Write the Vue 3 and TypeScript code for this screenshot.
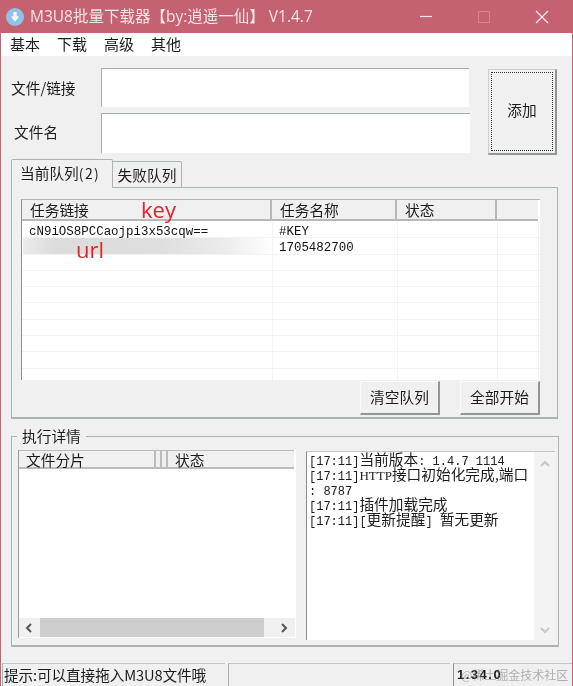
<script setup lang="ts">
const menus: string[] = ['基本', '下载', '高级', '其他']

const queueCols = [
  { label: '任务链接', width: 250 },
  { label: '任务名称', width: 125 },
  { label: '状态', width: 100 },
  { label: '', width: 41 },
]

const rows: string[][] = [
  ['cN9iOS8PCCaojpi3x53cqw==', '#KEY'],
  ['', '1705482700'],
  [], [], [], [], [], [], [], [],
]
</script>

<template>
  <div class="window">
    <header class="titlebar">
      <svg class="app-icon" width="18" height="18" viewBox="0 0 18 18">
        <circle cx="9" cy="9" r="9" fill="#8fc3ea" />
        <path d="M7.4 4h3.2v4.6h2.6L9 13.4 4.8 8.6h2.6z" fill="#fff" />
      </svg>
      <span class="title">M3U8批量下载器【by:逍遥一仙】 V1.4.7</span>
      <div class="controls">
        <svg width="14" height="14" viewBox="0 0 14 14"><path d="M1 6.5h12" stroke="#f6e6e8" stroke-width="1.2" /></svg>
        <svg width="14" height="14" viewBox="0 0 14 14"><rect x="1.5" y="1.5" width="11" height="11" fill="none" stroke="#d68490" /></svg>
        <svg width="14" height="14" viewBox="0 0 14 14"><path d="M1 1l12 12M13 1L1 13" stroke="#fbeef0" stroke-width="1.2" /></svg>
      </div>
    </header>

    <nav class="menubar">
      <span v-for="m in menus" :key="m">{{ m }}</span>
    </nav>

    <section class="form">
      <div class="fields">
        <div class="field">
          <label class="lbl-link">文件/链接</label>
          <div class="input"></div>
        </div>
        <div class="field second">
          <label class="lbl-name">文件名</label>
          <div class="input"></div>
        </div>
      </div>
      <button class="btn add"><span class="focus">添加</span></button>
    </section>

    <div class="tabs">
      <div class="tab active">当前队列<span class="count">(2)</span></div>
      <div class="tab">失败队列</div>
    </div>

    <section class="panel">
      <div class="listview">
        <div class="lv-head">
          <div v-for="(c, i) in queueCols" :key="i" class="lv-th" :style="{ width: c.width + 'px' }">{{ c.label }}</div>
        </div>
        <div class="lv-body">
          <div v-for="(r, i) in rows" :key="i" class="lv-row">
            <div v-for="(c, j) in queueCols" :key="j" class="lv-td" :class="{ smudge: i === 1 && j === 0 }" :style="{ width: c.width + 'px' }">{{ r[j] }}</div>
          </div>
        </div>
        <span class="note note-key">key</span>
        <span class="note note-url">url</span>
      </div>
      <div class="panel-actions">
        <button class="btn act">清空队列</button>
        <button class="btn act">全部开始</button>
      </div>
    </section>

    <section class="group">
      <div class="legend">执行详情</div>
      <div class="group-inner">
        <div class="parts">
          <div class="parts-head">
            <div class="ph one">文件分片</div>
            <div class="ph two"></div>
            <div class="ph two"></div>
            <div class="ph three">状态</div>
          </div>
          <div class="parts-body"></div>
          <div class="hscroll">
            <svg width="12" height="12" viewBox="0 0 12 12"><path d="M8 2L4 6l4 4" fill="none" stroke="#555" stroke-width="2" /></svg>
            <div class="thumb"></div>
            <svg width="12" height="12" viewBox="0 0 12 12"><path d="M4 2l4 4-4 4" fill="none" stroke="#555" stroke-width="2" /></svg>
          </div>
        </div>
        <div class="log">
          <div class="log-text">
            <div class="ln">[17:11]<span class="zh">当前版本</span>: 1.4.7 1114</div>
            <div class="ln">[17:11]<span class="http">HTTP</span><span class="zh">接口初始化完成,端口</span></div>
            <div class="ln">: 8787</div>
            <div class="ln">[17:11]<span class="zh">插件加载完成</span></div>
            <div class="ln">[17:11][<span class="zh">更新提醒</span>] <span class="zh">暂无更新</span></div>
          </div>
          <div class="vscroll">
            <svg width="12" height="12" viewBox="0 0 12 12"><path d="M2 8l4-4 4 4" fill="none" stroke="#c8c8c8" stroke-width="2" /></svg>
            <svg width="12" height="12" viewBox="0 0 12 12"><path d="M2 4l4 4 4-4" fill="none" stroke="#c8c8c8" stroke-width="2" /></svg>
          </div>
        </div>
      </div>
    </section>

    <footer class="statusbar">
      <div class="seg hint">提示:可以直接拖入M3U8文件哦</div>
      <div class="seg middle"></div>
      <div class="seg version">
        <span class="ver">1.34.0</span>
        <span class="watermark">@稀土掘金技术社区</span>
      </div>
    </footer>
  </div>
</template>

<style>
html, body {
  margin: 0;
  overflow: hidden;
  background: #f0f0f0;
}
</style>

<style scoped>
.window {
  width: 573px;
  height: 686px;
  box-sizing: border-box;
  display: flex;
  flex-direction: column;
  background: #f0f0f0;
  border-left: 1px solid #c46271;
  border-right: 1px solid #c46271;
  color: #1c1c1c;
  font-family: "Noto Sans CJK SC", "Liberation Sans", sans-serif;
  font-size: 14.7px;
  overflow: hidden;
  filter: blur(0.3px);
}

.titlebar {
  height: 33px;
  flex: none;
  margin: 0 -1px;
  display: flex;
  align-items: center;
  background: #c46271;
  color: #f7e3e6;
  padding-left: 6px;
}
.app-icon { margin-right: 6px; }
.title {
  font-size: 15.5px;
  line-height: 30px;
  margin-bottom: 2px;
  font-family: "Open Sans", "Noto Sans CJK SC", sans-serif;
  white-space: pre;
}
.controls {
  margin-left: auto;
  display: flex;
  gap: 44px;
  padding-right: 24px;
}
.controls svg { display: block; }

.menubar {
  height: 23px;
  flex: none;
  display: flex;
  align-items: center;
  gap: 17px;
  padding: 0 0 2px 9px;
  box-sizing: border-box;
  background: #fff;
  font-size: 15px;
}

.form {
  display: flex;
  margin-top: 12px;
  height: 87px;
  flex: none;
}
.fields { width: 469px; }
.field {
  display: flex;
  height: 39px;
}
.field.second {
  height: 40px;
  margin-top: 6px;
}
.field label {
  width: 100px;
  flex: none;
  box-sizing: border-box;
  display: flex;
  align-items: center;
}
.lbl-link { padding: 0 0 0 10px; }
.lbl-name { padding: 0 0 4px 13px; }
.input {
  width: 368px;
  background: #fff;
  border-top: 1px solid #a3adad;
  border-left: 1px solid #a3adad;
  box-sizing: border-box;
}
.field.second .input { width: 369px; }

.btn {
  font: inherit;
  color: inherit;
  padding: 0 0 2px;
  background: #f0f0f0;
  box-sizing: border-box;
  border-style: solid;
  border-width: 1px 2px 2px 1px;
  border-color: #fbfbfb #8f9797 #8f9797 #fbfbfb;
}
.add {
  width: 69px;
  height: 86px;
  margin: 1px 0 0 18px;
  padding: 2px;
  border-top-color: #c9cfcf;
  border-left-color: #c9cfcf;
}
.focus {
  display: flex;
  align-items: center;
  justify-content: center;
  height: 100%;
  padding-bottom: 4px;
  border: 1px dotted #333;
  box-sizing: border-box;
}

.tabs {
  display: flex;
  align-items: flex-end;
  margin: 4px 0 0 10px;
  height: 28px;
  flex: none;
  position: relative;
  z-index: 1;
}
.tab {
  box-sizing: border-box;
  width: 69px;
  height: 26px;
  border: 1px solid #a9b5b3;
  border-bottom: none;
  border-left: none;
  border-radius: 0 2px 0 0;
  text-align: center;
  line-height: 25px;
  white-space: nowrap;
}
.tab.active {
  width: 102px;
  height: 29px;
  margin-bottom: -1px;
  padding-left: 8px;
  text-align: left;
  background: #f0f0f0;
  border-left: 1px solid #a9b5b3;
  border-radius: 2px 2px 0 0;
  line-height: 26px;
}
.count {
  letter-spacing: 1.4px;
  font-size: 14px;
}

.panel {
  box-sizing: border-box;
  margin-left: 10px;
  width: 547px;
  height: 232px;
  flex: none;
  border: 1px solid #a9b5b3;
  border-bottom-width: 2px;
  padding: 11px 0 0 9px;
}
.listview {
  position: relative;
  width: 519px;
  height: 181px;
  background: #fff;
  border-top: 1px solid #b4b4b4;
  border-left: 1px solid #8f8f8f;
  box-sizing: border-box;
  overflow: hidden;
}
.lv-head {
  display: flex;
  height: 19px;
  width: 516px;
  background: #f0f0f0;
  border-bottom: 2px solid #b8b8b8;
}
.lv-th {
  box-sizing: border-box;
  padding-left: 8px;
  line-height: 20px;
  border-right: 2px solid #b8b8b8;
  flex: none;
}
.lv-th:last-child { border-right: none; }
.lv-body { padding-top: 1px; }
.lv-row {
  display: flex;
  height: 16.3px;
  padding-left: 1px;
  box-sizing: border-box;
  border-bottom: 1px solid #f3f3f3;
}
.lv-td {
  box-sizing: border-box;
  flex: none;
  padding-left: 6px;
  border-right: 1px solid #f3f3f3;
  font-family: "Liberation Mono", monospace;
  font-size: 12.45px;
  line-height: 20px;
  color: #111;
  white-space: nowrap;
}
.smudge {
  background: linear-gradient(90deg, #ececec 0%, #dcdcdc 12%, #dedede 55%, #ebebeb 80%, #fff 100%);
}
.note {
  position: absolute;
  color: #e0252b;
  font-family: "Open Sans", sans-serif;
  font-size: 22px;
  line-height: 24px;
}
.note-key { left: 119px; top: -3px; }
.note-url { left: 54px; top: 37px; }

.panel-actions {
  display: flex;
  justify-content: flex-end;
  gap: 20px;
  width: 519px;
  margin-top: 1px;
}
.act {
  width: 80px;
  height: 34px;
}

.group {
  box-sizing: border-box;
  margin: 17px 0 0 10px;
  width: 548px;
  height: 211px;
  flex: none;
  border: 1px solid #a9b5b3;
  border-bottom-width: 2px;
}
.legend {
  width: fit-content;
  margin: -11px 0 0 5px;
  padding: 0 5px;
  height: 19px;
  line-height: 19px;
  background: #f0f0f0;
}
.group-inner {
  display: flex;
  gap: 10px;
  margin: 5px 0 0 6px;
}

.parts {
  width: 278px;
  height: 188px;
  display: flex;
  flex-direction: column;
  background: #fff;
  border-left: 1px solid #9b9b9b;
  box-sizing: border-box;
}
.parts-head {
  display: flex;
  width: 275px;
  height: 19px;
  background: #f0f0f0;
  border-top: 1px solid #bcbcbc;
  border-bottom: 2px solid #bcbcbc;
  box-sizing: border-box;
  flex: none;
}
.ph {
  box-sizing: border-box;
  line-height: 18px;
  white-space: nowrap;
  border-right: 2px solid #bcbcbc;
}
.ph.one { width: 137px; padding-left: 7px; }
.ph.two { width: 6px; }
.ph.three { flex: 1; padding-left: 7px; border-right: none; }
.parts-body { flex: 1; }
.hscroll {
  height: 19px;
  flex: none;
  display: flex;
  align-items: center;
  background: #f0f0f0;
  margin: 0 1px 1px 0;
  box-sizing: border-box;
  padding: 0 5px 0 4px;
}
.thumb {
  width: 224px;
  height: 19px;
  margin: 0 auto 0 5px;
  background: #cdcdcd;
}

.log {
  width: 249px;
  height: 189px;
  margin-top: 1px;
  display: flex;
  background: #fff;
  border-left: 1px solid #8c8c8c;
  border-top: 1px solid #c4c4c4;
  box-sizing: border-box;
}
.log-text {
  flex: 1;
  padding: 3px 0 0 2px;
  font-family: "Liberation Mono", monospace;
  font-size: 12px;
  white-space: pre;
}
.ln {
  height: 15px;
  line-height: 15px;
}
.zh {
  font-family: "Noto Sans CJK SC", sans-serif;
  font-size: 14.7px;
  line-height: 0;
}
.http {
  font-family: "Liberation Serif", serif;
  font-size: 13px;
  line-height: 0;
}
.vscroll {
  width: 21px;
  flex: none;
  display: flex;
  flex-direction: column;
  align-items: center;
  justify-content: space-between;
  padding: 6px 0 4px;
  box-sizing: border-box;
  background: #f3f3f3;
}

.statusbar {
  display: flex;
  margin: 16px 0 0 1px;
  height: 23px;
  flex: none;
}
.seg {
  box-sizing: border-box;
  border-top: 1px solid #c2c8c8;
  border-left: 1px solid #a9b0b0;
  line-height: 21px;
  white-space: nowrap;
}
.hint { width: 223px; font-size: 14.7px; padding-left: 1px; letter-spacing: -0.15px; }
.middle { width: 222px; margin-left: 3px; }
.version {
  position: relative;
  width: 119px;
  margin-left: 3px;
  padding-left: 3px;
  border-left-color: #8c8c8c;
  font-family: "Liberation Sans", sans-serif;
  font-size: 13px;
  font-weight: 700;
}
.ver { letter-spacing: 1.5px; }
.watermark {
  position: absolute;
  left: 7px;
  top: 0;
  font-family: "Noto Sans CJK SC", sans-serif;
  font-size: 12px;
  font-weight: 400;
  color: rgba(120, 120, 120, 0.55);
}
</style>
